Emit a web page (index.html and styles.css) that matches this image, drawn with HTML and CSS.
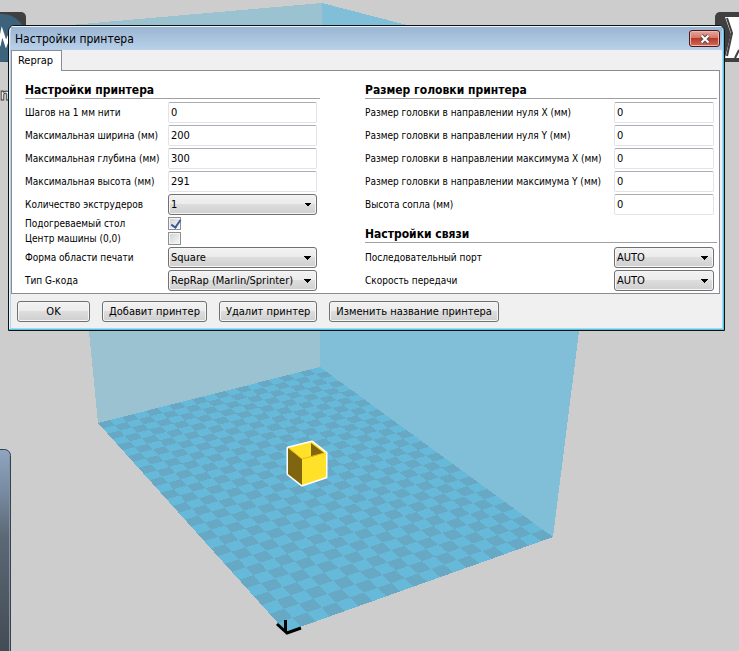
FILE: index.html
```html
<!DOCTYPE html>
<html lang="ru">
<head>
<meta charset="utf-8">
<title>Настройки принтера</title>
<link rel="stylesheet" href="styles.css">
</head>
<body>
<main class="workspace">
  <svg class="scene" viewBox="0 0 739 651" aria-hidden="true">
    <g shape-rendering="crispEdges">
    <path fill="#9bc2d0" d="M59 26 322 3V368L98 423Z"/>
    <path fill="#81bed7" d="M322 3 611 78 553 537 320 368V3Z"/>
    <path fill="#9bc2d0" d="M300 5 322 3 320 368H300Z"/>
    <path fill="#67b9da" d="M286 632 553 537 320 367 98 423Z"/>
    <path id="tiles" fill="#67a8c4"/>
    </g>
    <path fill="#ffe12a" stroke="#fff" stroke-width="3" stroke-linejoin="round" d="M288 448 312 442 326 453V477L302 485 288 474Z"/>
    <path fill="#ffe12a" d="M288 448 312 442 326 453V477L302 485 288 474Z"/>
    <path fill="#7f6510" d="M288 448 302 459V485L288 474Z"/>
    <path fill="#7f6510" d="M311 443V457L324 453Z"/>
    <path fill="none" stroke="#f0b90d" d="M289 448 302 459 324 453"/>
    <path fill="none" stroke="#000" stroke-width="3" d="M285.500 620V632M277 624 287 633 301 628"/>
    <rect x="-20" y="12" width="46" height="50" rx="5" fill="#404040"/>
    <circle cx="2" cy="38" r="24" fill="#3d637c"/>
    <path fill="none" stroke="#fff" stroke-width="3" d="M-1 46 2 32 6 44 9 36"/>
    <rect x="715" y="12" width="40" height="50" rx="5" fill="#404040"/>
    <path fill="#fff" d="M725 17H739V58H725L731 34Z"/>
    <path fill="none" stroke="#404040" stroke-width="2" d="M727 18 732 33 727 56M735 58 739 50"/>
    <rect x="-20" y="449.500" width="30.500" height="230" rx="6" fill="url(#panel)" stroke="#344252"/>
    <path d="M9.500 456V651" stroke="#8492a2"/>
    <text class="scene-text" x="0" y="100">m</text>
    <defs><linearGradient id="panel" x1="0" y1="0" x2="0" y2="1"><stop offset="0" stop-color="#8fa5c1"/><stop offset=".2" stop-color="#76889e"/><stop offset=".38" stop-color="#5c6875"/><stop offset=".88" stop-color="#434b54"/></linearGradient></defs>
  </svg>

  <form class="dialog" onsubmit="return false">
    <header class="titlebar">
      <h1 class="title">Настройки принтера</h1>
      <button class="close" type="button" aria-label="Закрыть">
        <svg width="12" height="10" viewBox="0 0 12 10"><path d="M2.500 1.500 9.500 8.500M9.500 1.500 2.500 8.500" stroke="#5d4b52" stroke-width="4"/><path d="M2.500 1.500 9.500 8.500M9.500 1.500 2.500 8.500" stroke="#fff" stroke-width="2"/></svg>
      </button>
    </header>
    <div class="client">
      <div class="tabs"><button class="tab" type="button">Reprap</button></div>
      <div class="page">
        <div class="column machine">
          <h2 class="heading">Настройки принтера</h2>
          <div class="row"><label for="steps">Шагов на 1 мм нити</label><input class="field" id="steps" value="0"></div>
          <div class="row"><label for="width">Максимальная ширина (мм)</label><input class="field" id="width" value="200"></div>
          <div class="row"><label for="depth">Максимальная глубина (мм)</label><input class="field" id="depth" value="300"></div>
          <div class="row"><label for="height">Максимальная высота (мм)</label><input class="field" id="height" value="291"></div>
          <div class="row"><label for="extruders">Количество экструдеров</label><select class="field" id="extruders"><option>1</option></select></div>
          <div class="row check"><label for="bed">Подогреваемый стол</label><input class="box" id="bed" type="checkbox" checked></div>
          <div class="row check"><label for="center">Центр машины (0,0)</label><input class="box" id="center" type="checkbox"></div>
          <div class="row"><label for="shape">Форма области печати</label><select class="field" id="shape"><option>Square</option></select></div>
          <div class="row"><label for="gcode">Тип G-кода</label><select class="field" id="gcode"><option>RepRap (Marlin/Sprinter)</option></select></div>
        </div>
        <div class="column head">
          <h2 class="heading">Размер головки принтера</h2>
          <div class="row"><label for="xmin">Размер головки в направлении нуля X (мм)</label><input class="field" id="xmin" value="0"></div>
          <div class="row"><label for="ymin">Размер головки в направлении нуля Y (мм)</label><input class="field" id="ymin" value="0"></div>
          <div class="row"><label for="xmax">Размер головки в направлении максимума X (мм)</label><input class="field" id="xmax" value="0"></div>
          <div class="row"><label for="ymax">Размер головки в направлении максимума Y (мм)</label><input class="field" id="ymax" value="0"></div>
          <div class="row"><label for="nozzle">Высота сопла (мм)</label><input class="field" id="nozzle" value="0"></div>
          <h2 class="heading second">Настройки связи</h2>
          <div class="row"><label for="port">Последовательный порт</label><select class="field" id="port"><option>AUTO</option></select></div>
          <div class="row"><label for="baud">Скорость передачи</label><select class="field" id="baud"><option>AUTO</option></select></div>
        </div>
      </div>
      <footer class="actions">
        <button class="btn ok" type="submit">OK</button>
        <button class="btn" type="button">Добавит принтер</button>
        <button class="btn" type="button">Удалит принтер</button>
        <button class="btn" type="button">Изменить название принтера</button>
      </footer>
    </div>
  </form>
</main>
<script src="bed.js"></script>
</body>
</html>
```
FILE: styles.css
```css
* { box-sizing: border-box; }
body { margin: 0; background: #cdcdcd; color: #000; font: 11px/14px "DejaVu Sans Condensed", "Noto Sans", sans-serif; }
button, input, select { font: inherit; color: inherit; margin: 0; }
.workspace { position: relative; min-height: 100vh; padding: 25px 14px 0 8px; overflow: hidden; }
.scene { position: absolute; left: 0; top: 0; width: 739px; height: 651px; }
.scene-text { font: bold 16px "Noto Sans", sans-serif; fill: #fff; stroke: #404040; stroke-width: 1px; }
.dialog { position: relative; border: 1px solid #111; border-radius: 6px 6px 0 0; background: #b9d1ea; padding: 0 2px 2px; box-shadow: inset -1px -1px #43c8ea, inset 1px 1px #e6f2fc; overflow: hidden; }
.titlebar { display: flex; justify-content: space-between; align-items: center; height: 24px; padding: 1px 2px 0 4px; background: linear-gradient(#99b4d1, #b9d1ea); box-shadow: inset 0 1px #e6f2fc; }
.title { margin: 0; font-size: 12px; line-height: 16px; font-weight: 400; }
.close { display: flex; align-items: center; justify-content: center; width: 31px; height: 17px; padding: 0; border: 1px solid #4a1720; border-radius: 3px; background: linear-gradient(#e6a69b, #d4796c 45%, #b83a24 50%, #cf6c56); box-shadow: inset 0 0 0 1px #efb8ae; }
.client { background: #f0f0f0; }
.tabs { display: flex; height: 20px; }
.tab { position: relative; z-index: 1; height: 21px; width: 51px; margin: 0; padding: 0 2px 1px 0; border: 1px solid #898c95; border-bottom: 0; background: #fff; }
.page { display: flex; justify-content: space-between; gap: 45px; border: 1px solid #898c95; background: #fff; padding: 10px 2px 1px 13px; margin-right: 2px; }
.column { min-width: 0; }
.machine { flex: 295 1 0; }
.head { flex: 352 1 0; }
.heading { margin: 0 0 2px; height: 18px; border-bottom: 1px solid #a0a0a0; font-size: 12px; line-height: 18px; font-weight: 700; }
.second { margin-top: 7px; height: 20px; line-height: 22px; margin-bottom: 3px; }
.row { display: grid; grid-template-columns: minmax(0, 1fr) 149px; align-items: center; height: 23px; margin-right: 3px; white-space: nowrap; }
.row label { padding-top: 1px; font-size: 10px; }
.head .row { grid-template-columns: minmax(0, 1fr) 100px; }
.check { height: 15px; }
.field { width: 100%; height: 21px; border: 1px solid #e2e3ea; border-top-color: #abadb3; border-radius: 2px; background: #fff; padding: 0 2px 1px; }
select.field { appearance: none; border-color: #707070; border-radius: 3px; padding: 0 16px 0 2px; background: linear-gradient(to bottom right, #000 50%, transparent 50%) right 4px center / 4px 4px no-repeat, linear-gradient(to bottom left, #000 50%, transparent 50%) right 8px center / 4px 4px no-repeat, linear-gradient(#f2f2f2, #ebebeb 50%, #ddd 50%, #cfcfcf); box-shadow: inset 0 0 0 1px #f6f6f6; }
.box { appearance: none; width: 13px; height: 13px; border: 1px solid #8e8f8f; background: linear-gradient(135deg, #cfd3d7, #f6f6f6); box-shadow: inset 0 0 0 1px #f4f4f4; }
.box:checked::after { content: ""; display: block; width: 4px; height: 8px; margin: 0 0 0 4px; border: solid #3c5799; border-width: 0 2px 2px 0; transform: rotate(35deg); }
.actions { display: flex; flex-wrap: wrap; gap: 12px; padding: 7px 6px 6px; }
.btn { height: 21px; padding: 0 6px; border: 1px solid #707070; border-radius: 3px; background: linear-gradient(#f2f2f2, #ebebeb 50%, #ddd 50%, #cfcfcf); box-shadow: inset 0 0 0 1px #f6f6f6; }
.ok { width: 73px; }
```
FILE: bed.js
```js
// Draws the checkered 200 x 300 mm print bed, one tile per 10 mm, in perspective.
(function () {
  var columns = 20, rows = 30;
  var a = [286, 632], b = [553, 537], c = [320, 367], d = [98, 423];
  var dx1 = b[0] - c[0], dx2 = d[0] - c[0], sx = a[0] - b[0] + c[0] - d[0];
  var dy1 = b[1] - c[1], dy2 = d[1] - c[1], sy = a[1] - b[1] + c[1] - d[1];
  var det = dx1 * dy2 - dx2 * dy1;
  var g = (sx * dy2 - dx2 * sy) / det, h = (dx1 * sy - sx * dy1) / det;
  function project(i, j) {
    var u = i / columns, v = j / rows, w = g * u + h * v + 1;
    return [0, 1].map(function (k) {
      return ((a[k] + (b[k] - a[k] + g * b[k]) * u + (d[k] - a[k] + h * d[k]) * v) / w).toFixed(2);
    }).join(" ");
  }
  var path = "";
  for (var i = 0; i < columns; i++) {
    for (var j = 0; j < rows; j++) {
      if ((i + j) % 2) {
        path += "M" + [project(i, j), project(i + 1, j), project(i + 1, j + 1), project(i, j + 1)].join("L") + "Z";
      }
    }
  }
  document.getElementById("tiles").setAttribute("d", path);
})();
```
